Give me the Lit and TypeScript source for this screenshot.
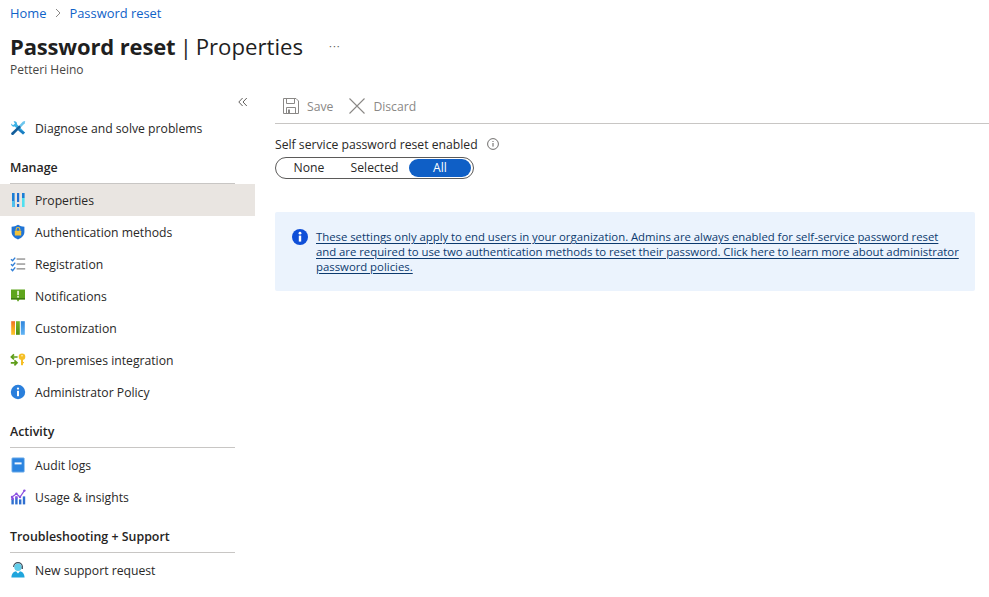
import { LitElement, html, css, svg } from "lit";
import { customElement } from "lit/decorators.js";

const ic = (c: unknown) => html`<svg class="ic" viewBox="0 0 16 16" width="16" height="16">${c}</svg>`;

const icons: Record<string, unknown> = {
  tools: svg`<path d="M1.2 3.6 L3 5.2 L5 3.6 L3.6 1.4 C5.6 .8 7.2 2 7 4.2 L15 12.4 L13 14.6 L4.8 6.6 C2.8 7.2 .8 5.6 1.2 3.6Z" fill="#3cb2e6"/><path d="M9.5 9 L15 12.4 L13 14.6 L8 10.2Z" fill="#1c7cc0"/><path d="M1.2 13 L9.4 5.2 L11.2 7 L3.2 15 C2 15.4 .8 14.2 1.2 13Z" fill="#125e9c"/><path d="M9.4 5.2 L13 1.4 L15.2 1 L14.8 3.2 L11.2 7Z" fill="#6cc6ee"/>`,
  props: svg`<rect x="2" y="1" width="2.6" height="14" fill="#1b7fd6"/><rect x="2" y="9" width="2.6" height="6" fill="#4fc3ee"/><rect x="7" y="1" width="2.2" height="9" fill="#1f6fd0"/><rect x="7" y="12" width="2.2" height="3" fill="#1f6fd0"/><rect x="12" y="1" width="2.6" height="5" fill="#1b7fd6"/><rect x="12" y="6" width="2.6" height="9" fill="#50e0f0"/>`,
  shield: svg`<path d="M8 .8 C10 2.2 12 2.6 14.4 2.7 V8 C14.4 11.6 11.4 14 8 15.4 C4.6 14 1.6 11.6 1.6 8 V2.7 C4 2.6 6 2.2 8 .8Z" fill="#1f74d6"/><rect x="4.8" y="6.8" width="6.4" height="4.8" rx=".5" fill="#f3c23a"/><path d="M6.1 6.8 V5.4 A1.9 1.9 0 0 1 9.9 5.4 V6.8" fill="none" stroke="#f3c23a" stroke-width="1.1"/>`,
  reg: svg`<g fill="none" stroke="#2f7fd8" stroke-width="1.4"><path d="M1 3.2 L2.6 4.8 L5.2 1.6"/><path d="M1 8.2 L2.6 9.8 L5.2 6.6"/><path d="M1 13 L2.6 14.6 L5.2 11.4"/></g><g fill="#8a8a8a"><rect x="6.6" y="2.4" width="8.6" height="1.3"/><rect x="6.6" y="7.4" width="8.6" height="1.3"/><rect x="6.6" y="12.2" width="8.6" height="1.3"/></g>`,
  notif: svg`<path d="M1 1.6 H15 V11.4 H9.6 L8 13.8 L6.6 11.4 H1Z" fill="#5ea51c"/><rect x="1" y="10" width="14" height="1.4" fill="#3f7d12"/><rect x="7.2" y="2.8" width="1.7" height="4.4" fill="#eaf5dc"/><rect x="7.2" y="8" width="1.7" height="1.6" fill="#eaf5dc"/>`,
  custom: svg`<defs><linearGradient id="cg1" x1="0" y1="0" x2="0" y2="1"><stop offset="0" stop-color="#f0702a"/><stop offset=".5" stop-color="#f7a51e"/><stop offset="1" stop-color="#fbc52e"/></linearGradient><linearGradient id="cg2" x1="0" y1="0" x2="0" y2="1"><stop offset="0" stop-color="#76b82a"/><stop offset="1" stop-color="#4f8e14"/></linearGradient><linearGradient id="cg3" x1="0" y1="0" x2="0" y2="1"><stop offset="0" stop-color="#2f85dc"/><stop offset="1" stop-color="#62b4f4"/></linearGradient></defs><rect x="1.2" y="1.2" width="3.8" height="13.6" fill="url(#cg1)"/><rect x="6" y="1.2" width="3.8" height="13.6" fill="url(#cg2)"/><rect x="10.8" y="1.2" width="4" height="13.6" fill="url(#cg3)"/>`,
  onprem: svg`<g fill="none" stroke="#5f9e1a" stroke-width="1.7"><path d="M1.6 5 H7.6 M4 2.4 L1.4 5 L4 7.4"/><path d="M.8 10.8 H6.8 M4.4 8.4 L7 10.8 L4.4 13.4"/></g><circle cx="12" cy="4.8" r="3.3" fill="#f6bf26"/><rect x="11" y="6" width="2" height="7.2" fill="#f6bf26"/><rect x="13" y="10" width="1" height="1.2" fill="#f6bf26"/><circle cx="12" cy="3.8" r=".8" fill="#fff6cf"/>`,
  info: svg`<circle cx="8" cy="8" r="7.2" fill="#2a7fdc"/><rect x="7" y="6.8" width="2" height="5.4" fill="#fff"/><circle cx="8" cy="4.6" r="1.15" fill="#fff"/>`,
  audit: svg`<rect x="1.8" y=".8" width="12.6" height="14.4" rx="1" fill="#2b84e0"/><rect x="1.8" y=".8" width="12.6" height="14.4" rx="1" fill="none" stroke="#9cc8f0" stroke-width=".8"/><rect x="4.6" y="5.4" width="7" height="2" fill="#f2f7fd"/>`,
  usage: svg`<g fill="#2f6fd0"><rect x="1.4" y="9.6" width="2.4" height="5.8"/><rect x="5.2" y="8.4" width="2.4" height="7"/><rect x="9" y="10.4" width="2.4" height="5"/><rect x="12.8" y="7.4" width="2.4" height="8"/></g><g fill="#8a4fe0"><rect x="1.4" y="8.6" width="2.4" height="2.4"/><rect x="5.2" y="7.2" width="2.4" height="2.4"/></g><path d="M2 8 L6.4 4.8 L10 8 L14.4 1.6" fill="none" stroke="#8a4fe0" stroke-width="1.2"/><g fill="#8a4fe0"><circle cx="2" cy="8" r="1.2"/><circle cx="6.4" cy="4.8" r="1.2"/><circle cx="10" cy="8" r="1.2"/><circle cx="14.4" cy="1.6" r="1.2"/></g>`,
  support: svg`<circle cx="8" cy="5.2" r="3.7" fill="#5fcdea"/><path d="M3.6 5 A4.4 4.4 0 0 1 12.4 5" fill="none" stroke="#3a4a58" stroke-width="1.1"/><path d="M1.4 15.4 C1.6 11 4 9.6 6 9.2 L8 11.4 L10 9.2 C12 9.6 14.4 11 14.6 15.4Z" fill="#1fa5dc"/><rect x="11.6" y="4.6" width="1.3" height="2.4" fill="#3a4a58"/>`,
};

type Item = { icon: string; label: string; selected?: boolean };
type Section = { title?: string; items: Item[] };

const sections: Section[] = [
  { items: [{ icon: "tools", label: "Diagnose and solve problems" }] },
  {
    title: "Manage",
    items: [
      { icon: "props", label: "Properties", selected: true },
      { icon: "shield", label: "Authentication methods" },
      { icon: "reg", label: "Registration" },
      { icon: "notif", label: "Notifications" },
      { icon: "custom", label: "Customization" },
      { icon: "onprem", label: "On-premises integration" },
      { icon: "info", label: "Administrator Policy" },
    ],
  },
  {
    title: "Activity",
    items: [
      { icon: "audit", label: "Audit logs" },
      { icon: "usage", label: "Usage & insights" },
    ],
  },
  { title: "Troubleshooting + Support", items: [{ icon: "support", label: "New support request" }] },
];

@customElement("app-root")
export class AppRoot extends LitElement {
  static styles = css`
    :host {
      display: block;
      width: 989px;
      height: 597px;
      overflow: hidden;
      background: #fff;
      color: #292827;
      font-family: "Open Sans", "Noto Sans", sans-serif;
      font-size: 12.2px;
    }
    a { color: inherit; text-decoration: none; }
    .crumbs {
      display: flex;
      align-items: center;
      gap: 8.5px;
      height: 26px;
      padding-left: 10px;
      color: #0f62c8;
      font-size: 12.9px;
    }
    .crumbs svg { display: block; }
    .head {
      box-sizing: border-box;
      display: flex;
      align-items: center;
      height: 36px;
      padding: 6px 10px 2px;
    }
    h1 {
      margin: 0;
      font-size: 22.2px;
      line-height: 28px;
      font-weight: 400;
      color: #1f1f1f;
    }
    h1 b { font-weight: 700; font-size: 22px; letter-spacing: -0.15px; }
    h1 .rest { margin-left: 0.5px; word-spacing: -2px; }
    .more { margin-left: 26px; color: #605e5c; font-size: 11px; letter-spacing: 1px; line-height: 1; position: relative; top: -1px; }
    .sub { padding-left: 10px; height: 16px; line-height: 16px; font-size: 12px; color: #484644; }
    .main { display: grid; grid-template-columns: 255px 1fr; column-gap: 20px; margin-top: 14px; }
    .side-top { display: flex; justify-content: flex-end; height: 20px; padding: 0 7px 0 0; align-items: center; }
    nav { display: block; }
    .item {
      display: flex;
      align-items: center;
      gap: 9px;
      height: 32px;
      padding-left: 10px;
    }
    .item.sel { background: #e9e5e1; }
    .ic { display: block; flex: none; }
    .title {
      box-sizing: border-box;
      height: 40px;
      margin: 0 20px 1px 10px;
      padding-top: 15px;
      line-height: 18px;
      font-weight: 600;
      font-size: 12.4px;
      color: #252423;
      border-bottom: 1px solid #c8c6c4;
    }
    .title.m0 { margin-bottom: 0; }
    .toolbar {
      display: flex;
      align-items: center;
      box-sizing: border-box;
      height: 32px;
      padding: 0 0 3px 8px;
      border-bottom: 1px solid #c8c6c4;
      color: #8a8886;
    }
    .tb { display: flex; align-items: center; gap: 8px; margin-right: 16px; }
    .content { min-width: 0; }
    .label { display: flex; align-items: center; gap: 9px; height: 20px; margin-top: 10px; }
    .seg {
      display: inline-flex;
      box-sizing: border-box;
      align-items: center;
      width: 199px;
      height: 22px;
      margin-top: 3px;
      padding: 0 1px;
      border: 1px solid #5b5a59;
      border-radius: 11px;
      vertical-align: top;
    }
    .seg span { text-align: center; line-height: 18px; height: 18px; border-radius: 9px; }
    .seg .a { width: 64px; }
    .seg .b { width: 67px; margin-right: 1px; }
    .seg .c { width: 62px; background: #0f5fc6; color: #fff; }
    .banner {
      box-sizing: border-box;
      display: flex;
      gap: 8px;
      width: 700px;
      height: 79px;
      margin-top: 33px;
      padding: 17px 0 0 17px;
      background: #ebf3fd;
      border-radius: 2px;
      color: #0c3a6e;
      line-height: 15px;
      font-size: 11.36px;
      word-spacing: -0.15px;
    }
    .banner a { text-decoration: underline; text-underline-offset: 2px; }
  `;

  render() {
    return html`
      <div class="crumbs">
        <a href="#">Home</a>
        <svg width="6" height="10" viewBox="0 0 6 10"><path d="M1 1 L5 5 L1 9" fill="none" stroke="#8a8886"/></svg>
        <a href="#">Password reset</a>
      </div>
      <div class="head">
        <h1><b>Password reset</b><span class="rest"> | Properties</span></h1>
        <span class="more">···</span>
      </div>
      <div class="sub">Petteri Heino</div>
      <div class="main">
        <div>
          <div class="side-top">
            <svg width="10" height="10" viewBox="0 0 10 10"><path d="M4.6 1 L.8 5 L4.6 9 M8.8 1 L5 5 L8.8 9" fill="none" stroke="#605e5c"/></svg>
          </div>
          <nav>
            ${sections.map(
              (s, i) => html`
                ${s.title ? html`<div class="title ${i === 1 ? "m0" : ""}">${s.title}</div>` : ""}
                ${s.items.map(
                  (it) => html`<div class="item ${it.selected ? "sel" : ""}">${ic(icons[it.icon])}<span>${it.label}</span></div>`
                )}
              `
            )}
          </nav>
        </div>
        <div class="content">
          <div class="toolbar">
            <div class="tb">
              <svg width="16" height="16" viewBox="0 0 16 16" fill="none" stroke="#8a8886"><path d="M.5.5 H13 L15.5 3 V15.5 H.5Z"/><path d="M3.5.5 V5.5 H11.5 V.5"/><path d="M3.5 15.5 V9.5 H12.5 V15.5"/><rect x="5" y="11.5" width="2" height="4" fill="#8a8886" stroke="none"/></svg>
              <span>Save</span>
            </div>
            <div class="tb">
              <svg width="16" height="16" viewBox="0 0 16 16" fill="none" stroke="#8a8886" stroke-width="1.1"><path d="M.5.5 L15.5 15.5 M15.5.5 L.5 15.5"/></svg>
              <span>Discard</span>
            </div>
          </div>
          <div class="label">
            <span>Self service password reset enabled</span>
            <svg width="12" height="12" viewBox="0 0 12 12"><circle cx="6" cy="6" r="5.4" fill="none" stroke="#605e5c" stroke-width=".9"/><rect x="5.5" y="5" width="1" height="3.6" fill="#605e5c"/><rect x="5.5" y="3" width="1" height="1" fill="#605e5c"/></svg>
          </div>
          <div class="seg"><span class="a">None</span><span class="b">Selected</span><span class="c">All</span></div>
          <div class="banner">
            <svg class="ic" width="16" height="16" viewBox="0 0 16 16"><circle cx="8" cy="8" r="8" fill="#0f4fd8"/><rect x="6.8" y="6.6" width="2.4" height="6" fill="#fff"/><circle cx="8" cy="4.2" r="1.4" fill="#fff"/></svg>
            <a href="#">These settings only apply to end users in your organization. Admins are always enabled for self-service password reset<br />and are required to use two authentication methods to reset their password. Click here to learn more about administrator<br />password policies.</a>
          </div>
        </div>
      </div>
    `;
  }
}
